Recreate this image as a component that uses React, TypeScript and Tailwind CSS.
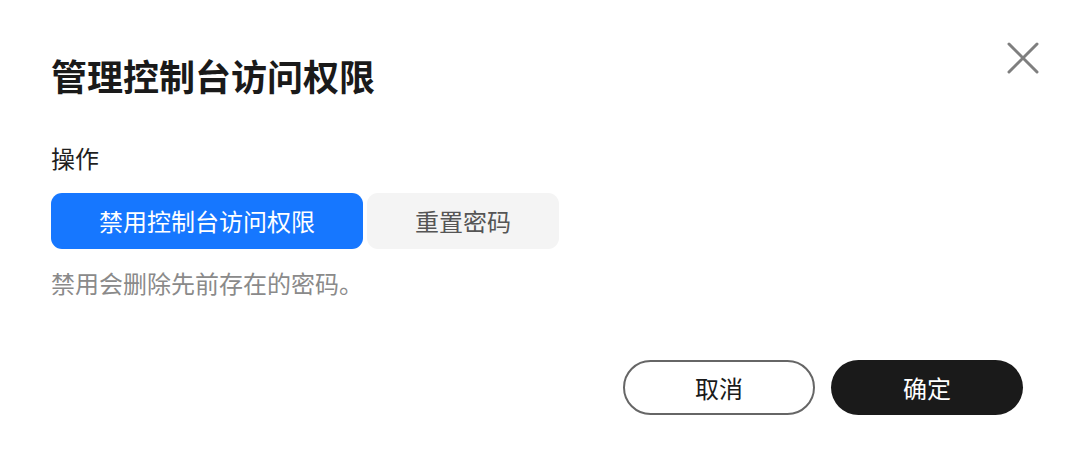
import React from "react";

const font = { fontFamily: '"Noto Sans CJK SC", "Noto Sans", sans-serif' };

const CloseIcon = () => (
  <svg width="32" height="32" viewBox="0 0 32 32" fill="none">
    <path d="M2 2 L30 30 M30 2 L2 30" stroke="#7f7f7f" strokeWidth="3" strokeLinecap="round" />
  </svg>
);

export default function App() {
  return (
    <div
      className="relative w-[1066px] h-[463px] bg-white pl-[51px] pr-[43px] pt-[51px] flex flex-col"
      style={font}
    >
      <button className="absolute top-[42px] right-[27px] p-0">
        <CloseIcon />
      </button>

      <h1 className="text-[36px] leading-[48px] font-bold text-[#1a1a1a]">管理控制台访问权限</h1>

      <div className="mt-[43px] text-[24px] leading-[32px] text-[#1f1f1f]">操作</div>

      <div className="mt-[19px] flex gap-[4px]">
        <button className="w-[312px] h-[56px] rounded-[11px] bg-[#1677ff] text-white text-[24px]">
          禁用控制台访问权限
        </button>
        <button className="w-[192px] h-[56px] rounded-[11px] bg-[#f4f4f4] text-[#555555] text-[24px]">
          重置密码
        </button>
      </div>

      <p className="mt-[18px] text-[24px] leading-[32px] text-[#8a8a8a]">禁用会删除先前存在的密码。</p>

      <div className="mt-[61px] flex justify-end gap-[16px]">
        <button className="w-[192px] h-[55px] rounded-full border-2 border-[#666666] bg-white text-[#1a1a1a] text-[24px]">
          取消
        </button>
        <button className="w-[192px] h-[55px] rounded-full bg-[#1a1a1a] text-white text-[24px]">
          确定
        </button>
      </div>
    </div>
  );
}
